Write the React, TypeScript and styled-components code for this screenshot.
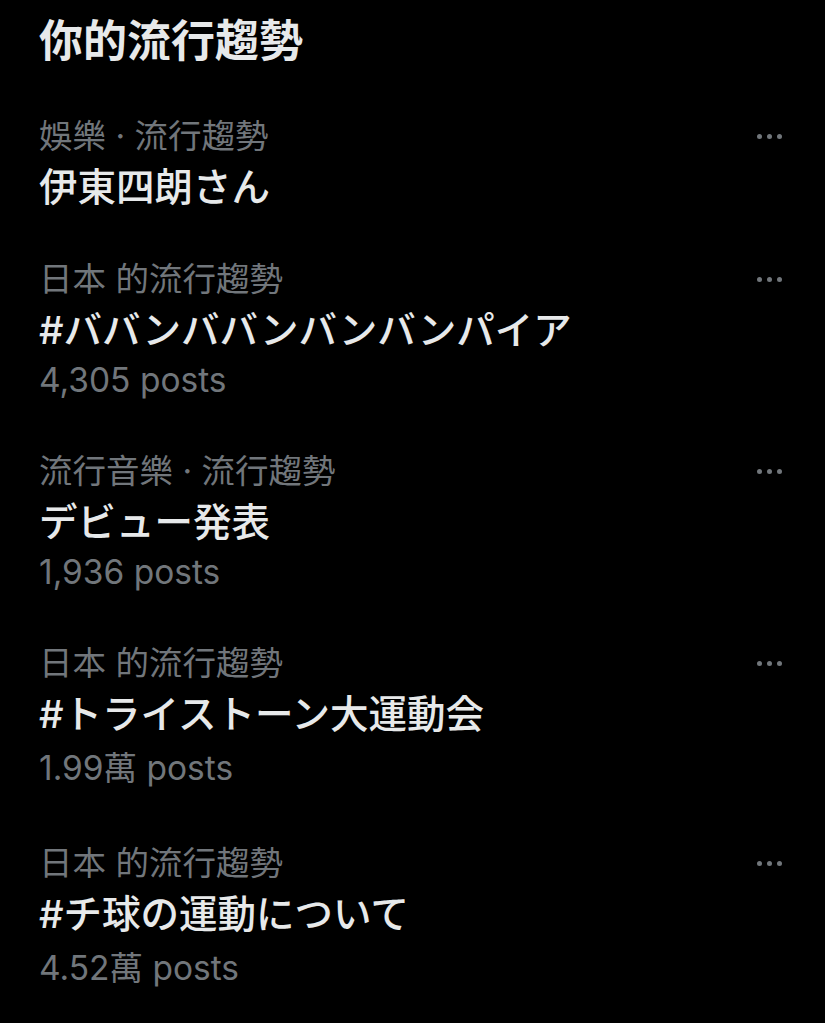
import React from "react";
import styled, { createGlobalStyle } from "styled-components";

const Global = createGlobalStyle`
  html, body { margin: 0; padding: 0; background: #000; }
  body { -webkit-font-smoothing: antialiased; }
`;

const Page = styled.main`
  background: #000;
  min-height: 1023px;
  padding: 11px 43px 0 39px;
  box-sizing: border-box;
`;

const Title = styled.h1`
  margin: 0 0 20px;
  font-family: "Inter", "Noto Sans CJK TC", sans-serif;
  font-size: 44px;
  line-height: 60px;
  font-weight: 600;
  color: #e7e9ea;
`;

const List = styled.ul`
  list-style: none;
  margin: 0;
  padding: 0;
`;

const Row = styled.li`
  display: grid;
  grid-template-columns: 1fr auto;
  column-gap: 16px;
  padding: 20px 0 21px;
`;

const Body = styled.div`
  display: flex;
  flex-direction: column;
  min-width: 0;
`;

const Category = styled.div`
  font-family: "Inter", "Noto Sans CJK TC", sans-serif;
  font-size: 33.5px;
  line-height: 50px;
  height: 50px;
  color: #71767b;
`;

const Name = styled.div`
  font-family: "Inter", "Noto Sans CJK JP", sans-serif;
  font-size: 38.5px;
  line-height: 52px;
  height: 52px;
  font-weight: 500;
  color: #e7e9ea;
`;

const Posts = styled.div<{ $tall?: boolean }>`
  font-family: "Inter", "Noto Sans CJK TC", sans-serif;
  font-size: 33.5px;
  line-height: ${(p) => (p.$tall ? 57 : 49)}px;
  height: ${(p) => (p.$tall ? 57 : 49)}px;
  color: #71767b;
`;

const More = styled.button`
  display: flex;
  align-items: center;
  gap: 5px;
  height: 50px;
  padding: 0;
  border: 0;
  background: transparent;
  cursor: pointer;
`;

const Dot = styled.span`
  width: 5px;
  height: 5px;
  border-radius: 50%;
  background: #71767b;
`;

type Trend = { category: string; name: string; posts?: string };

const trends: Trend[] = [
  { category: "娛樂 · 流行趨勢", name: "伊東四朗さん" },
  { category: "日本 的流行趨勢", name: "#ババンババンバンバンパイア", posts: "4,305 posts" },
  { category: "流行音樂 · 流行趨勢", name: "デビュー発表", posts: "1,936 posts" },
  { category: "日本 的流行趨勢", name: "#トライストーン大運動会", posts: "1.99萬 posts" },
  { category: "日本 的流行趨勢", name: "#チ球の運動について", posts: "4.52萬 posts" },
];

export default function App() {
  return (
    <>
      <Global />
      <Page>
        <Title>你的流行趨勢</Title>
        <List>
          {trends.map((t, i) => (
            <Row key={i}>
              <Body>
                <Category>{t.category}</Category>
                <Name>{t.name}</Name>
                {t.posts && <Posts $tall={t.posts.includes("萬")}>{t.posts}</Posts>}
              </Body>
              <More aria-label="More">
                <Dot />
                <Dot />
                <Dot />
              </More>
            </Row>
          ))}
        </List>
      </Page>
    </>
  );
}
